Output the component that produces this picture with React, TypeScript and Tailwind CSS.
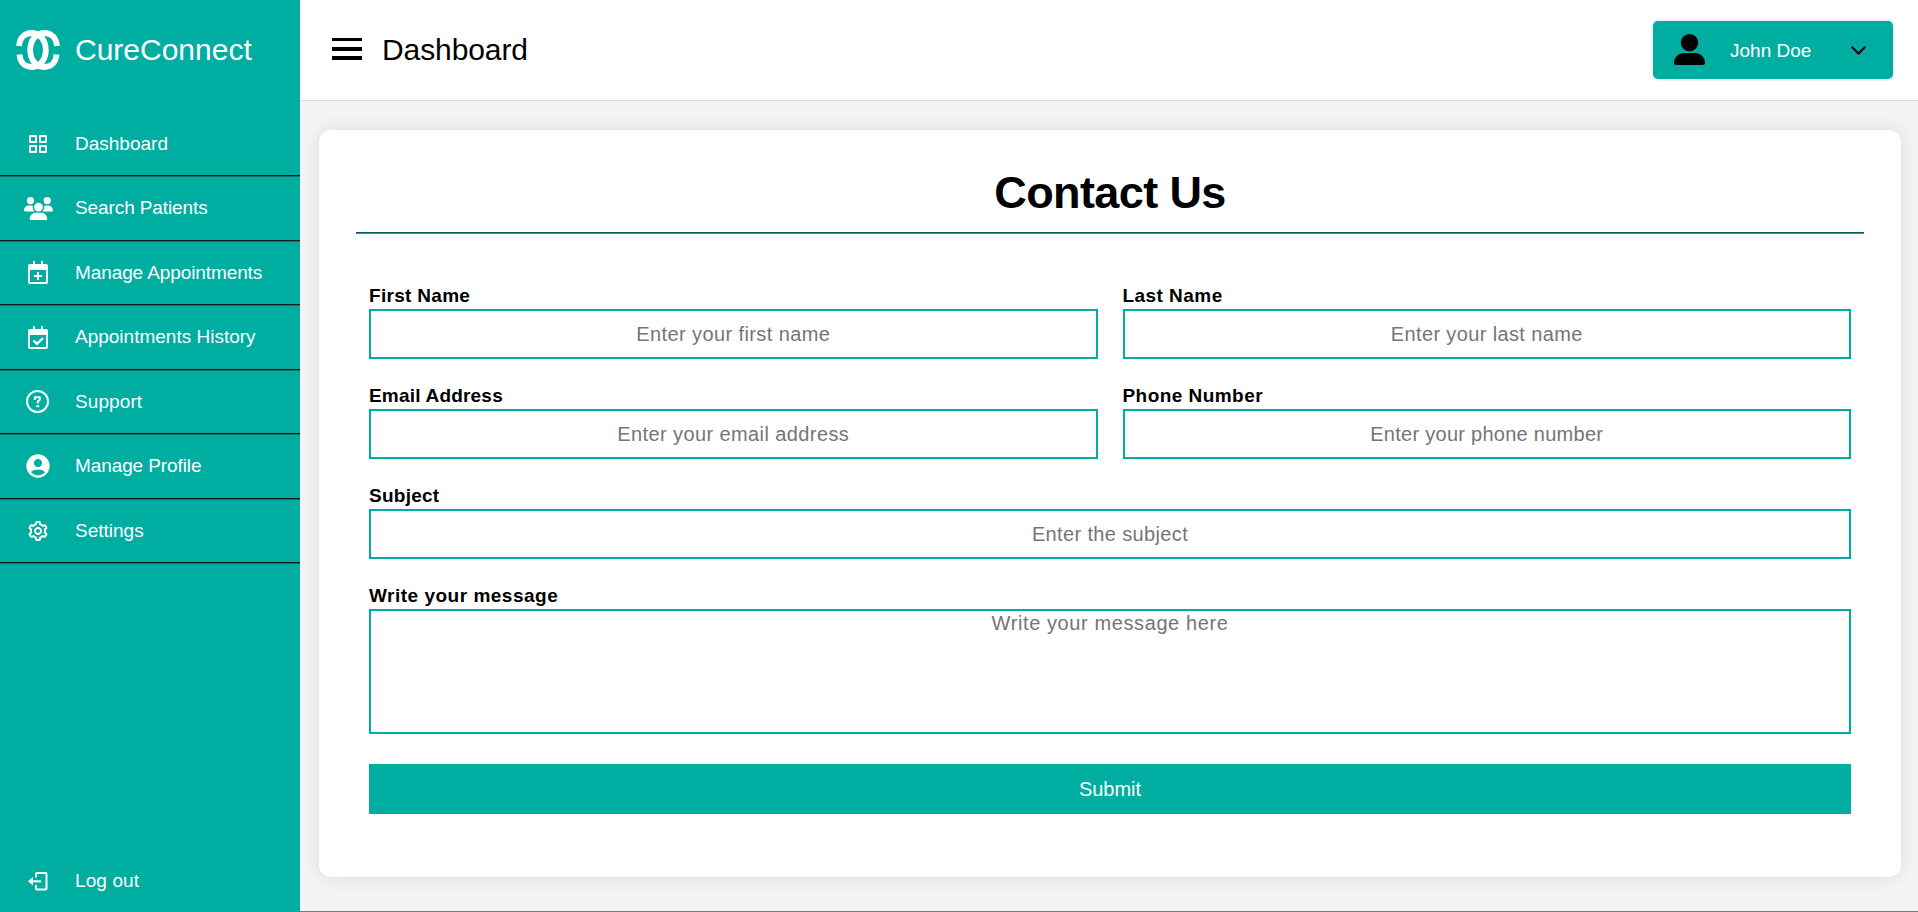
import React from 'react';
import { BiGridAlt, BiCog } from 'react-icons/bi';
import { FaUsers } from 'react-icons/fa6';
import { MdAccountCircle } from 'react-icons/md';

type IconProps = { className?: string };

function CalendarBase({ className, children }: IconProps & { children: React.ReactNode }) {
  return (
    <svg viewBox="0 0 20 23" className={className} fill="currentColor">
      <path fillRule="evenodd" d="M5 0h2v3h6V0h2v3h3q2 0 2 2v16q0 2-2 2H2q-2 0-2-2V5q0-2 2-2h3zM2 9v12h16V9z" />
      {children}
    </svg>
  );
}

function CalendarPlus({ className }: IconProps) {
  return (
    <CalendarBase className={className}>
      <path d="M9 11h2v3h3v2h-3v3H9v-3H6v-2h3z" />
    </CalendarBase>
  );
}

function CalendarCheck({ className }: IconProps) {
  return (
    <CalendarBase className={className}>
      <path d="M5.500 14.500 9 17.800 15 12" fill="none" stroke="currentColor" strokeWidth="2.400" />
    </CalendarBase>
  );
}

function HelpCircle({ className }: IconProps) {
  return (
    <svg viewBox="0 0 23 23" className={className} fill="none" stroke="currentColor">
      <circle cx="11.500" cy="11.500" r="10.500" strokeWidth="2" />
      <path d="M8.800 10V7.200H13.800V9.800L11.800 11.200V13.500" strokeWidth="2" strokeLinejoin="round" />
      <path d="M10.300 16.200h3" strokeWidth="2" />
    </svg>
  );
}

function LogoutIcon({ className }: IconProps) {
  return (
    <svg viewBox="0 0 20 19" className={className} fill="none" stroke="currentColor">
      <path d="M8 5.500V2q0-1 1-1H17.500q1 0 1 1V16.500q0 1-1 1H9q-1 0-1-1V13" strokeWidth="2" />
      <path d="M4 9.300H13" strokeWidth="2" />
      <path d="M0 9.300 5 5v8.600z" fill="currentColor" stroke="none" />
    </svg>
  );
}

type NavItem = { label: string; icon: React.ComponentType<IconProps>; iconClass: string; textClass: string };

const navItems: NavItem[] = [
  { label: 'Dashboard', icon: BiGridAlt, iconClass: 'size-[24px]', textClass: '' },
  { label: 'Search Patients', icon: FaUsers, iconClass: 'size-[29px] ml-px', textClass: 'tracking-[-0.1px]' },
  { label: 'Manage Appointments', icon: CalendarPlus, iconClass: 'h-[23px] w-[20px]', textClass: 'tracking-[-0.1px]' },
  { label: 'Appointments History', icon: CalendarCheck, iconClass: 'h-[23px] w-[20px]', textClass: '' },
  { label: 'Support', icon: HelpCircle, iconClass: 'size-[23px]', textClass: 'tracking-[0.1px]' },
  { label: 'Manage Profile', icon: MdAccountCircle, iconClass: 'size-[28px]', textClass: 'tracking-[-0.1px]' },
  { label: 'Settings', icon: BiCog, iconClass: 'size-[24px]', textClass: '' },
];

function Logo() {
  return (
    <svg width="44" height="40" viewBox="0 0 44 40" fill="none" stroke="white" strokeWidth="5.8">
      <path d="M3 16C3.500 8 8.500 3 16 3C24.500 3 29.800 11 29.800 20S24.500 37 16 37C8.500 37 4 32 3.500 24.500" />
      <path d="M41 16C40.500 8 35.500 3 28 3C19.500 3 14.200 11 14.200 20S19.500 37 28 37C35.500 37 40 32 40.500 24.500" />
    </svg>
  );
}

function Sidebar() {
  return (
    <aside className="flex w-[300px] shrink-0 flex-col bg-[#00ada1] text-white">
      <div className="flex h-[112.5px] items-start pl-4 pt-[30px]">
        <Logo />
        <span className="ml-[15px] text-[30px] leading-10">CureConnect</span>
      </div>
      <nav>
        {navItems.map(({ label, icon: Icon, iconClass, textClass }) => (
          <div key={label} className="h-[64.5px]">
            <a className="flex h-[62.5px] items-center text-[19px]">
              <span className="flex w-[75px] items-center justify-center">
                <Icon className={iconClass} />
              </span>
              <span className={textClass}>{label}</span>
            </a>
            <div className="h-[2px] border-t border-[#0a1c1b] bg-[#1a6f69]" />
          </div>
        ))}
      </nav>
      <a className="mb-[9px] mt-auto flex h-[42px] items-center text-[19px]">
        <span className="flex w-[75px] items-center justify-center">
          <LogoutIcon className="h-[19px] w-[20px]" />
        </span>
        <span className="tracking-[0.1px]">Log out</span>
      </a>
    </aside>
  );
}

function Header() {
  return (
    <header className="flex h-[101px] shrink-0 items-center border-b border-[#dcdcdc] bg-white pl-8 pr-[25px]">
      <svg width="30" height="22" viewBox="0 0 30 22" className="-mt-[2px]">
        <path d="M0 0h30v3H0zM0 9h30v4H0zM0 18h30v4H0z" />
      </svg>
      <h2 className="ml-[20px] text-[30px] leading-10 tracking-[-0.1px]">Dashboard</h2>
      <button className="ml-auto flex h-[58px] w-[240px] items-center rounded-[5px] bg-[#00ada1] pl-[21px] shadow-[0_0_0_2px_#f0f0f0]">
        <svg width="31" height="31" viewBox="0 0 31 31" className="-mt-px">
          <circle cx="15.500" cy="8.700" r="8.700" />
          <path d="M0 29C0 23.500 4 19 10.500 19h10C27 19 31 23.500 31 29q0 2-2 2H2q-2 0-2-2z" />
        </svg>
        <span className="ml-[25px] mt-[2px] text-[19px] text-white">John Doe</span>
        <svg width="15" height="9" viewBox="0 0 15 9" className="ml-auto mr-[27px]" fill="none" stroke="black" strokeWidth="2">
          <path d="M.700 .700 7.500 7.500 14.300 .700" />
        </svg>
      </button>
    </header>
  );
}

type FieldProps = { label: string; placeholder: string; labelClass: string; inputClass: string; wide?: boolean };

function Field({ label, placeholder, labelClass, inputClass, wide = false }: FieldProps) {
  return (
    <label className={wide ? 'col-span-2 block' : 'block'}>
      <span className={`flex h-[25px] items-center text-[19px] font-bold ${labelClass}`}>{label}</span>
      <input
        placeholder={placeholder}
        className={`block h-[50px] w-full border-2 border-[#00ada1] text-center text-[20px] placeholder:text-[#757575] ${inputClass}`}
      />
    </label>
  );
}

export default function App() {
  return (
    <div className="flex h-[912px] w-[1918px] flex-col overflow-hidden font-['Liberation_Sans',Arial,sans-serif] text-black">
      <div className="flex h-[911px]">
        <Sidebar />
        <div className="flex min-w-0 flex-1 flex-col bg-[#f4f4f4]">
          <Header />
          <main className="ml-[19px] mr-[17px] mt-[29px] h-[747px] rounded-[12px] bg-white px-[37px] pt-[33px] shadow-[0_0_20px_rgba(0,0,0,0.1)]">
            <h1 className="h-[69px] text-center text-[45px] font-bold leading-[60px] tracking-[-0.6px]">Contact Us</h1>
            <div className="h-[2px] border-t border-[#00605a] bg-[#00ada1]" />
            <form className="mt-[50px] grid grid-cols-2 gap-x-[25px] gap-y-[25px] px-[13px]">
              <Field label="First Name" placeholder="Enter your first name" labelClass="tracking-[0.3px]" inputClass="tracking-[0.4px]" />
              <Field label="Last Name" placeholder="Enter your last name" labelClass="tracking-[0.45px]" inputClass="tracking-[0.37px]" />
              <Field label="Email Address" placeholder="Enter your email address" labelClass="tracking-[0.2px]" inputClass="tracking-[0.4px]" />
              <Field label="Phone Number" placeholder="Enter your phone number" labelClass="tracking-[0.45px]" inputClass="tracking-[0.27px]" />
              <Field label="Subject" placeholder="Enter the subject" labelClass="tracking-[0.25px]" inputClass="tracking-[0.36px]" wide />
              <label className="col-span-2 block">
                <span className="flex h-[25px] items-center text-[19px] font-bold tracking-[0.5px]">Write your message</span>
                <textarea
                  placeholder="Write your message here"
                  className="block h-[125px] w-full resize-none border-2 border-[#00ada1] text-center text-[20px] leading-[25px] tracking-[0.6px] placeholder:text-[#757575]"
                />
              </label>
              <button type="button" className="col-span-2 mt-[5px] h-[50px] bg-[#00ada1] text-[20px] text-white">
                Submit
              </button>
            </form>
          </main>
        </div>
      </div>
      <div className="h-px bg-[#777]" />
    </div>
  );
}
